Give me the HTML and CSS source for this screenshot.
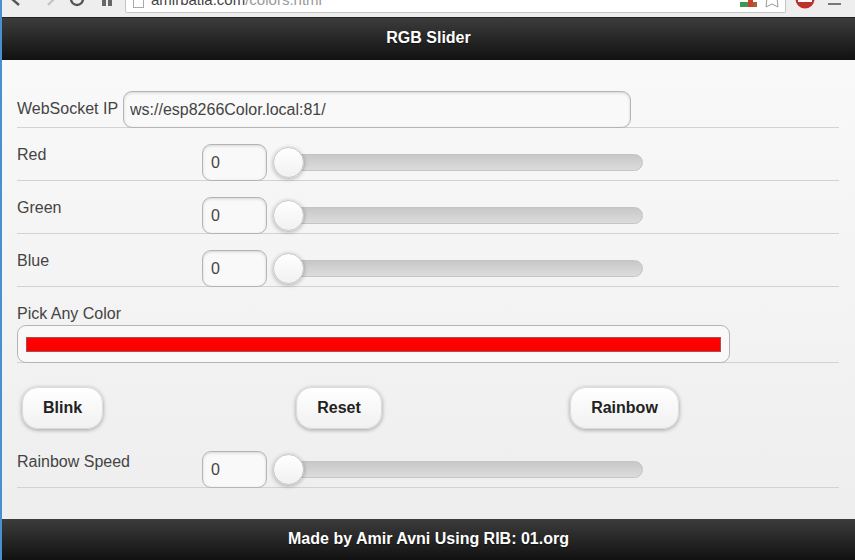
FILE: index.html
```html
<!DOCTYPE html>
<html lang="en">
<head>
  <meta charset="UTF-8">
  <title>RGB Slider</title>
  <link rel="stylesheet" href="styles.css">
</head>
<body>
  <!-- Browser toolbar, cut off by the top of the window -->
  <div class="browser-bar">
    <svg class="nav-icons" width="123" height="8" viewBox="0 0 123 8">
      <path d="M10 -1 L17 5" fill="none" stroke="#555" stroke-width="2.4"/>
      <path d="M52 -1 L46 5" fill="none" stroke="#c4c4c4" stroke-width="2.4"/>
      <path d="M81 -1 A6 6 0 0 1 69 -1" fill="none" stroke="#555" stroke-width="2.4"/>
      <path d="M100 -1 H104 V6 H100 Z M106 -1 H110 V6 H106 Z" fill="#666"/>
    </svg>
    <div class="address">
      <span class="page-icon"></span>
      <span class="url"><b>amirbatia.com</b>/colors.html</span>
      <span class="address-icons">
        <svg width="18" height="8" viewBox="0 0 18 8"><rect x="0" y="2" width="8" height="5" fill="#3c9a50"/><rect x="8" y="0" width="5" height="7" fill="#c9402b"/><rect x="13" y="2" width="4" height="5" fill="#a8603a"/></svg>
        <svg width="14" height="8" viewBox="0 0 14 8"><path d="M2 -2 L1 7 L7 4 L13 7 L12 -2" fill="none" stroke="#999"/></svg>
      </span>
    </div>
    <svg class="stop-icon" width="20" height="9" viewBox="0 0 20 9"><circle cx="10" cy="-1" r="9.5" fill="#c0302a"/><rect x="3" y="-2" width="14" height="4" fill="#fff"/></svg>
    <span class="menu-dash"></span>
  </div>

  <div class="page">
    <header class="bar top-bar">RGB Slider</header>

    <main class="content">
      <div class="row ws-row">
        <label>WebSocket IP</label>
        <input class="text-input ws-input" type="text" value="ws://esp8266Color.local:81/">
      </div>

      <div class="row slider-row">
        <label>Red</label>
        <input class="text-input num-input" type="text" value="0">
        <div class="track"><span class="thumb"></span></div>
      </div>

      <div class="row slider-row">
        <label>Green</label>
        <input class="text-input num-input" type="text" value="0">
        <div class="track"><span class="thumb"></span></div>
      </div>

      <div class="row slider-row">
        <label>Blue</label>
        <input class="text-input num-input" type="text" value="0">
        <div class="track"><span class="thumb"></span></div>
      </div>

      <div class="row color-row">
        <label>Pick Any Color</label>
        <div class="color-box"><div class="color-fill"></div></div>
      </div>

      <div class="buttons">
        <button class="btn btn-blink">Blink</button>
        <button class="btn btn-reset">Reset</button>
        <button class="btn btn-rainbow">Rainbow</button>
      </div>

      <div class="row slider-row speed-row">
        <label>Rainbow Speed</label>
        <input class="text-input num-input" type="text" value="0">
        <div class="track"><span class="thumb"></span></div>
      </div>
    </main>

    <footer class="bar bottom-bar">Made by Amir Avni Using RIB: 01.org</footer>
  </div>
</body>
</html>
```
FILE: styles.css
```css
* {
  box-sizing: border-box;
}
html, body {
  height: 100%;
}
body {
  margin: 0;
  overflow: hidden;
  display: flex;
  flex-direction: column;
  font-family: "Liberation Sans", Arial, sans-serif;
  font-size: 16px;
  color: #444;
  background: #e8e8e8;
}

/* browser toolbar */
.browser-bar {
  height: 17px;
  flex: none;
  display: flex;
  align-items: flex-start;
  background: #eeeeee;
  border-left: 2px solid #4a90d0;
}
.nav-icons {
  flex: none;
}
.address {
  width: 661px;
  height: 13px;
  display: flex;
  background: #fff;
  border: 1px solid #c4c4c4;
  border-top: none;
  border-radius: 0 0 2px 2px;
  overflow: hidden;
}
.page-icon {
  width: 11px;
  height: 8px;
  margin-left: 7px;
  border: 1px solid #aaa;
  border-top: none;
}
.url {
  margin-left: 7px;
  margin-top: -9px;
  font-size: 15px;
  line-height: 17px;
  color: #999;
  white-space: nowrap;
}
.url b {
  font-weight: normal;
  color: #444;
}
.address-icons {
  margin-left: auto;
  display: flex;
  gap: 7px;
  padding-right: 6px;
}
.stop-icon {
  margin-left: 9px;
}
.menu-dash {
  width: 13px;
  height: 2px;
  margin: 3px 0 0 13px;
  background: #777;
}

/* page */
.page {
  flex: 1;
  display: flex;
  flex-direction: column;
  border-left: 2px solid #4a90d0;
  min-height: 0;
}
.bar {
  flex: none;
  display: flex;
  align-items: center;
  justify-content: center;
  color: #fff;
  font-weight: bold;
  text-shadow: 0 1px 1px #111;
}
.top-bar {
  height: 43px;
  padding-bottom: 2px;
  background: linear-gradient(#3c3c3c, #111);
  border-top: 1px solid #222;
}
.bottom-bar {
  height: 41px;
  padding-bottom: 1px;
  background: linear-gradient(#3c3c3c, #111);
}
.content {
  flex: 1;
  min-height: 0;
  padding: 31px 16px 0 15px;
  background: linear-gradient(#f9f9f9, #eeeeee);
}

/* rows */
.row {
  border-bottom: 1px solid #d2d2d2;
}
.row label {
  line-height: 20px;
}
.ws-row {
  height: 37px;
  display: flex;
  align-items: center;
}
.ws-row label {
  width: 106px;
  flex: none;
  margin-top: -1px;
}
.text-input {
  height: 37px;
  font: inherit;
  color: #444;
  background: #f9f9f9;
  border: 1px solid #b4b4b4;
  border-radius: 9px;
  box-shadow: inset 0 1px 3px rgba(0,0,0,0.15);
  outline: none;
}
.ws-input {
  width: 508px;
  padding: 2px 6px 0;
}
.slider-row {
  height: 53px;
  padding-top: 16px;
  display: flex;
}
.slider-row label {
  width: 185px;
  flex: none;
  margin-top: 1px;
}
.num-input {
  width: 65px;
  padding: 0 8px;
}
.track {
  position: relative;
  width: 355px;
  height: 17px;
  margin: 10px 0 0 21px;
  background: linear-gradient(#c8c8c8, #dcdcdc);
  border: 1px solid #c4c4c4;
  border-radius: 9px;
}
.thumb {
  position: absolute;
  left: -16px;
  top: -8px;
  width: 31px;
  height: 31px;
  border-radius: 50%;
  background: linear-gradient(#fff, #f1f1f1);
  border: 1px solid #c8c8c8;
  box-shadow: 0 1px 4px rgba(0,0,0,0.3);
}
.color-row {
  height: 76px;
  padding-top: 17px;
}
.color-row label {
  display: block;
  height: 21px;
}
.color-box {
  width: 713px;
  height: 38px;
  padding: 11px 8px;
  background: #f9f9f9;
  border: 1px solid #b4b4b4;
  border-radius: 9px;
}
.color-fill {
  height: 15px;
  background: #ff0000;
  border: 1px solid #a85050;
}
.buttons {
  display: flex;
  height: 42px;
  margin-top: 24px;
  padding-left: 5px;
}
.btn {
  height: 42px;
  padding: 0;
  font: inherit;
  font-weight: bold;
  color: #222;
  background: linear-gradient(#fff, #f1f1f1);
  border: 1px solid #dcdcdc;
  border-radius: 16px;
  box-shadow: 0 1px 4px rgba(0,0,0,0.35);
}
.btn-blink {
  width: 81px;
}
.btn-reset {
  width: 86px;
  margin-left: 193px;
}
.btn-rainbow {
  width: 109px;
  margin-left: 188px;
}
.speed-row {
  height: 59px;
  padding-top: 22px;
}
```
